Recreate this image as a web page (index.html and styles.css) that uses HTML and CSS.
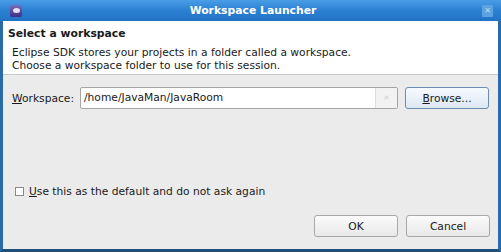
FILE: index.html
```html
<!DOCTYPE html>
<html lang="en">
<head>
  <meta charset="UTF-8" />
  <title>Workspace Launcher</title>
  <link rel="stylesheet" href="styles.css">
</head>
<body>
  <div class="window">
    <div class="titlebar">
      <div class="app-icon"><span></span></div>
      <span class="title">Workspace Launcher</span>
      <div class="close">&#x2715;</div>
    </div>

    <div class="banner">
      <h1>Select a workspace</h1>
      <p>Eclipse SDK stores your projects in a folder called a workspace.<br>
      Choose a workspace folder to use for this session.</p>
    </div>

    <div class="content">
      <div class="row">
        <label class="field-label"><u>W</u>orkspace:</label>
        <div class="combo">
          <span class="combo-text">/home/JavaMan/JavaRoom</span>
          <span class="combo-arrow">&#x2715;</span>
        </div>
        <button class="btn browse"><u>B</u>rowse...</button>
      </div>

      <label class="check-row">
        <span class="checkbox"></span>
        <span><u>U</u>se this as the default and do not ask again</span>
      </label>

      <div class="actions">
        <button class="btn">OK</button>
        <button class="btn">Cancel</button>
      </div>
    </div>
  </div>
</body>
</html>
```

FILE: styles.css
```css
* {
  margin: 0;
  padding: 0;
  box-sizing: border-box;
}

body {
  width: 501px;
  height: 252px;
  overflow: hidden;
  font-family: 'DejaVu Sans', sans-serif;
  font-size: 10.7px;
  color: #1a1a1a;
  background: #2b6aa8;
}

.window {
  height: 252px;
  display: flex;
  flex-direction: column;
  border-left: 3px solid #2a6aa6;
  border-right: 3px solid #2a6aa6;
  border-bottom: 3px solid #1f4f7a;
  background: #ebebeb;
}

.titlebar {
  height: 21px;
  margin: 0 -3px;
  padding: 0 8px 0 10px;
  display: flex;
  align-items: center;
  background: linear-gradient(#4a9ee6, #2d82d4 45%, #2172c4);
  color: #fff;
}

.app-icon {
  width: 12px;
  height: 12px;
  border-radius: 2px;
  background: linear-gradient(#7a6cc0, #3c2e86);
  display: flex;
  align-items: center;
  justify-content: center;
}

.app-icon span {
  width: 7px;
  height: 5px;
  border-radius: 50%;
  background: #e4e0f2;
}

.title {
  flex: 1;
  text-align: center;
  font-weight: bold;
  font-size: 10.8px;
  padding-left: 2px;
}

.close {
  width: 11px;
  height: 12px;
  display: flex;
  align-items: center;
  justify-content: center;
  font-size: 8px;
  font-weight: bold;
  color: #b9d8f2;
  background: #5aa3e0;
  border-radius: 1px;
}

.banner {
  height: 54px;
  background: #fff;
  border-bottom: 1px solid #c9c9c9;
  padding: 3px 5px 0;
}

.banner h1 {
  font-size: 10.8px;
  font-weight: bold;
  line-height: 19px;
}

.banner p {
  padding: 3px 0 0 4px;
  line-height: 13px;
}

.content {
  flex: 1;
  display: flex;
  flex-direction: column;
  padding: 12px 8px 12px 9px;
}

.row {
  display: flex;
  align-items: center;
}

.field-label {
  width: 68px;
}

.combo {
  width: 318px;
  height: 22px;
  display: flex;
  border: 1px solid #a5a5a5;
  border-radius: 2px;
  background: #fff;
}

.combo-text {
  flex: 1;
  padding: 3px 0 0 3px;
}

.combo-arrow {
  width: 22px;
  border-left: 1px solid #dcdcdc;
  background: #f2f2f2;
  color: #d0d0d0;
  font-size: 7px;
  display: flex;
  align-items: center;
  justify-content: center;
}

.btn {
  width: 84px;
  height: 22px;
  font-family: inherit;
  font-size: 10.7px;
  color: #1a1a1a;
  border: 1px solid #a8a8a8;
  border-radius: 3px;
  background: linear-gradient(#fbfbfb, #e8e8e8);
}

.browse {
  margin-left: 7px;
  border-color: #6a8db0;
  background: linear-gradient(#f6fafd, #dde8f2);
}

.check-row {
  margin-top: 76px;
  padding-left: 3px;
  display: flex;
  align-items: center;
  gap: 5px;
}

.checkbox {
  width: 9px;
  height: 9px;
  border: 1px solid #8a8a8a;
  background: #fff;
}

.actions {
  margin-top: auto;
  display: flex;
  justify-content: flex-end;
  gap: 8px;
}
```
